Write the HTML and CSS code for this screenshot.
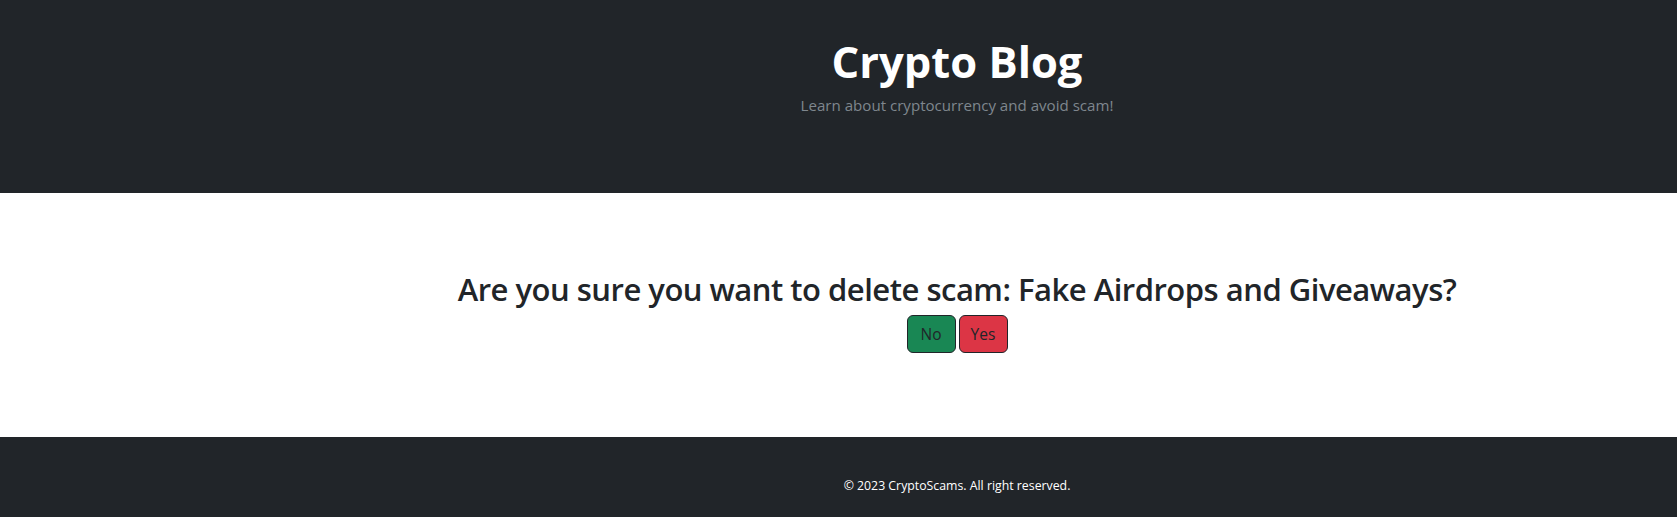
FILE: index.html
```html
<!DOCTYPE html>
<html lang="en">
<head>
<meta charset="utf-8">
<title>Crypto Blog</title>
<link rel="stylesheet" href="styles.css">
</head>
<body>
<header class="site-header">
  <div class="center-col">
    <h1 class="site-title">Crypto Blog</h1>
    <p class="site-lead">Learn about cryptocurrency and avoid scam!</p>
  </div>
</header>
<main class="site-main">
  <div class="center-col">
    <h2 class="confirm-title">Are you sure you want to delete scam: Fake Airdrops and Giveaways?</h2>
    <div class="btn-row">
      <button class="btn btn-no" type="button">No</button>
      <button class="btn btn-yes" type="button">Yes</button>
    </div>
  </div>
</main>
<footer class="site-footer">
  <div class="center-col">
    <p class="footer-text">© 2023 CryptoScams. All right reserved.</p>
  </div>
</footer>
</body>
</html>
```
FILE: styles.css
```css
* { box-sizing: border-box; }
html, body { margin: 0; padding: 0; }
body {
  font-family: "Open Sans", "Noto Sans", sans-serif;
  color: #212529;
  background: #fff;
  width: 1677px;
  height: 517px;
  overflow: hidden;
}
.center-col {
  padding-left: 237px;
  text-align: center;
}
.site-header {
  background: #212529;
  height: 193px;
  padding-top: 36px;
}
.site-title {
  margin: 0;
  color: #fff;
  font-size: 43.5px;
  font-weight: 700;
  line-height: 52px;
}
.site-lead {
  margin: 5px 0 0;
  color: #7f878e;
  font-size: 15.1px;
  line-height: 24px;
}
.site-main {
  height: 244px;
  padding-top: 77px;
}
.confirm-title {
  margin: 0;
  font-size: 31px;
  font-weight: 600;
  letter-spacing: -0.5px;
  line-height: 38px;
}
.btn-row {
  display: flex;
  justify-content: center;
  gap: 3px;
  margin-top: 7px;
}
.btn {
  font-family: inherit;
  font-size: 15.5px;
  line-height: 24px;
  color: #212529;
  height: 38px;
  padding: 6px 0;
  border: 1px solid #212529;
  border-radius: 6px;
}
.btn-no { background: #198754; width: 49px; }
.btn-yes { background: #dc3545; width: 49px; }
.site-footer {
  background: #212529;
  height: 80px;
  padding-top: 39px;
}
.footer-text {
  margin: 0;
  color: #fff;
  font-size: 12.3px;
  line-height: 20px;
}
```
